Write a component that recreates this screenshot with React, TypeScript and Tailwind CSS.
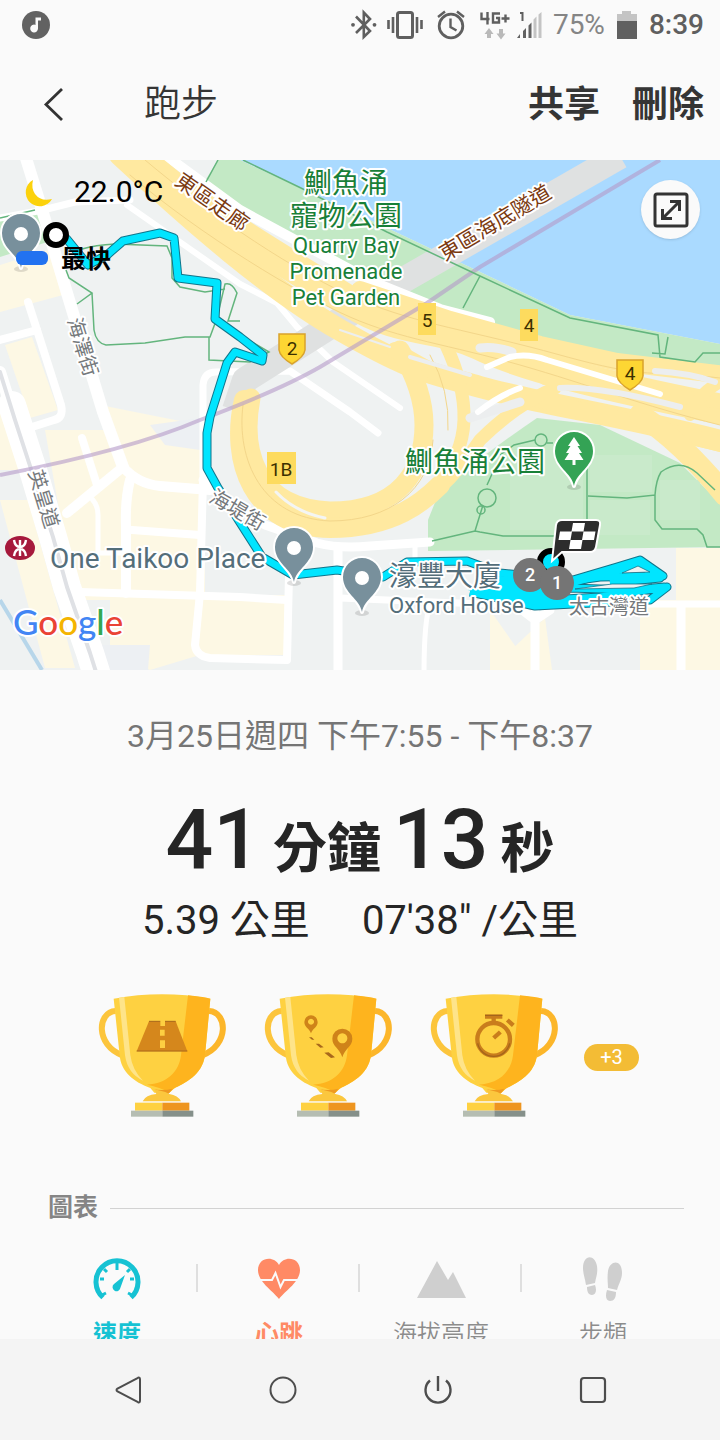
import { ReactNode } from "react";

const NAV_ICON = "h-[30px] w-[30px]";

function StatusBar() {
  return (
    <div className="flex h-[50px] items-center justify-between pl-[21px] pr-4 text-[#5f5f5f]">
      <svg viewBox="0 0 30 30" className="h-[30px] w-[30px]" aria-hidden="true">
        <circle cx="15" cy="15" r="14" fill="#626262" />
        <path d="M14.5 7.5h5.5v3h-3v8a3.9 3.9 0 1 1-2.5-3.6z" fill="#fafafa" />
      </svg>
      <div className="flex items-center">
        <svg viewBox="352 8 194 32" className="mr-2 h-8 w-[194px]" fill="none" stroke="#5f5f5f" aria-hidden="true">
          {/* bluetooth */}
          <path d="M357 15.5 371 30 364.8 36V11.5L371 18 357 32" strokeWidth="2.6" />
          <circle cx="354" cy="23.8" r="1.9" fill="#5f5f5f" stroke="none" />
          <circle cx="375.5" cy="23.8" r="1.9" fill="#5f5f5f" stroke="none" />
          {/* vibrate */}
          <rect x="398.5" y="11.5" width="15" height="25" rx="2" strokeWidth="3" />
          <path d="M394 16v16M418 16v16M389.5 19v9M422.5 19v9" strokeWidth="2.6" />
          {/* alarm */}
          <circle cx="452" cy="25" r="11.8" strokeWidth="2.8" />
          <path d="M451.5 17.5V26l6 3.5M439 16l7-5.5M458 10.5l7 5.5" strokeWidth="2.4" />
          {/* network */}
          <path d="M482.5 11.5V18h8M488.5 11v12.500M501 12.500h-7v9h6v-4.500h-3M502.5 17.500h8M506.5 13.500v8" strokeWidth="2.4" />
          <path d="M490 33v4M502 28v5" stroke="#b9b9b9" strokeWidth="4" />
          <path d="M490 27l4.5 6h-9zM502 38.5l4.5-6h-9z" fill="#b9b9b9" stroke="none" />
          <path d="M521 12h2.5v8" strokeWidth="2" />
          <path d="M518 37l3-4v4zM524 37v-7l3-3v10zM529.5 37V24.5l3-3V37z" fill="#626262" stroke="none" />
          <path d="M534.5 37V18.5l3-3V37zM539.5 37V13.5l3-2.5v26z" fill="#c4c4c4" stroke="none" />
        </svg>
        <span className="text-[28px] leading-8 text-[#858585]">75%</span>
        <svg viewBox="0 0 20 28" className="mx-3 h-7 w-5" aria-hidden="true">
          <path d="M5 0h9v3h6v7H0V3h5z" fill="#c4c4c4" />
          <path d="M0 10h20v18H0z" fill="#606060" />
        </svg>
        <span className="text-[28px] font-medium leading-8">8:39</span>
      </div>
    </div>
  );
}

function Toolbar() {
  return (
    <div className="flex h-[110px] items-center pl-10 pr-4 text-[#353535]">
      <button aria-label="返回" className="flex h-12 w-[104px] items-center">
        <svg viewBox="0 0 30 40" className="h-10 w-[30px]" fill="none" stroke="#333" strokeWidth="2.8">
          <path d="M22 4 6 19.5 22 35" />
        </svg>
      </button>
      <h1 className="flex-1 text-[37px] font-[350] leading-[48px]">跑步</h1>
      <button className="text-[36px] font-bold leading-[48px]">共享</button>
      <button className="ml-8 text-[36px] font-bold leading-[48px]">刪除</button>
    </div>
  );
}

function Pin({ x, y, color = "#78909c", children }: { x: number; y: number; color?: string; children?: ReactNode }) {
  return (
    <g transform={`translate(${x} ${y})`}>
      <ellipse cx="0" cy="1" rx="7" ry="3" fill="#000" opacity=".12" />
      <path
        d="M0 0C-2-13-19-19-19-35a19 19 0 1 1 38 0C19-19 2-13 0 0z"
        fill={color}
        stroke="#fff"
        strokeWidth="4"
        paintOrder="stroke"
        strokeLinejoin="round"
      />
      {children ?? <circle cy="-34" r="7" fill="#fff" />}
    </g>
  );
}

function Roads() {
  return (
    <g fill="none" strokeLinecap="round" strokeLinejoin="round">
      {/* minor streets */}
      <g stroke="#fff" strokeWidth="10">
        <path d="M0 218 43 210 75 202 130 200" strokeWidth="7" />
        <path d="M25 155 43 213 67 293 103 412 123 467" strokeWidth="12" />
        <path d="M28 302 37 330 61 405Q64 418 54 420L32 427" strokeWidth="8" />
        <path d="M0 340 37 330" strokeWidth="8" />
        <path d="M0 372 15 420" strokeWidth="12" />
        <path d="M12 405 33 470 53 537 67 587 90 653 97 675" strokeWidth="28" />
        <path d="M82 438 97 485" strokeWidth="8" />
        <path d="M67 513 123 467Q138 484 160 486L210 490" />
        <path d="M130 480Q125 500 126 527V593" />
        <path d="M132 530 200 535M80 592 240 597 287 600" strokeWidth="8" />
        <path d="M90 497Q98 504 98 515V553H125" strokeWidth="5" />
        <path d="M203 480V385Q204 372 216 372L290 371 350 412 378 433" strokeWidth="7" />
        <path d="M203 480 200 593 195 645Q196 656 210 658L287 660 289 575" strokeWidth="8" />
        <path d="M203 480Q240 510 265 525L317 543Q340 549 370 546L430 542" strokeWidth="9" />
        <path d="M338 547V675" strokeWidth="9" />
        <path d="M340 598 480 604H725" strokeWidth="7" />
        <path d="M522 610 535 620 550 610M535 612V675M681 607V675" strokeWidth="9" />
        <path d="M415 545V565M430 605Q424 620 424 675" strokeWidth="5" />
        <path d="M127 205 240 284 277 303 297 327 333 362 400 408" strokeWidth="6" />
      </g>
      <path d="M0 372 15 420 33 475 53 537 67 587 90 653 97 675" stroke="#dfe1e5" strokeWidth="4" />

      {/* tunnel approach */}
      <path d="M235 410 245 380 400 282 620 156" stroke="#dfe1e1" strokeWidth="26" strokeLinecap="butt" />

      {/* expressway */}
      <path d="M165 155 240 210 373 282 440 309 490 322" stroke="#fff" strokeWidth="10" />
      <path d="M135 155C200 215 300 270 350 302S440 325 480 345 600 385 725 410" stroke="#ffe9a0" strokeWidth="31" />
      <path d="M120 155C190 220 270 290 340 330S420 370 480 387 620 415 725 442" stroke="#ffe9a0" strokeWidth="22" />
      <path d="M360 290 450 320 540 345 617 362 725 375" stroke="#ffe9a0" strokeWidth="18" />
      <path d="M395 350Q420 365 440 375L560 405 725 445" stroke="#ffe9a0" strokeWidth="16" />
      <path d="M545 378Q580 372 620 390L725 402" stroke="#ffe9a0" strokeWidth="14" />
      <path d="M640 415Q680 440 725 495" stroke="#ffe9a0" strokeWidth="22" />
      <path d="M690 415Q700 390 725 380" stroke="#ffe9a0" strokeWidth="12" />
      <path d="M555 388Q515 405 480 440 460 470 440 488" stroke="#ffe9a0" strokeWidth="13" />
      <path d="M445 343Q465 385 464 420T435 490" stroke="#ffe9a0" strokeWidth="13" />
      {/* interchange loop */}
      <path d="M251 398C241 450 255 508 330 511 400 511 424 470 424 425 424 400 415 375 400 350" stroke="#ffe9a0" strokeWidth="19" />
      <path d="M244 400C230 460 252 528 330 528 395 528 425 500 440 485" stroke="#ffe9a0" strokeWidth="20" />
      <path d="M276 492Q295 512 325 518" stroke="#f4f5f3" strokeWidth="3" />
      {/* carriageway hairlines */}
      <g stroke="#f3d68a" strokeWidth="1">
        <path d="M130 175C200 235 300 295 350 317S450 345 520 365 640 405 720 425" />
        <path d="M145 160C210 215 300 275 360 300S470 330 560 355 650 370 720 378" />
        <path d="M243 405C236 460 262 518 330 521 390 521 430 490 433 440" />
        <path d="M430 355Q450 390 448 430" />
      </g>
      <g stroke="#eceeef" strokeWidth="6">
        <path d="M480 348Q495 346 512 352" strokeWidth="9" />
        <path d="M655 371Q690 373 715 382" />
        <path d="M560 388Q600 386 680 407" />
        <path d="M410 357 470 375" strokeWidth="4" />
        <path d="M470 418 520 402" strokeWidth="9" />
        <path d="M340 330 390 347" strokeWidth="2" />
      </g>
      <path d="M487 367 510 357Q528 353 547 360L660 394" stroke="#fff" strokeWidth="6" />
      <path d="M478 412Q500 395 520 388" stroke="#fff" strokeWidth="6" />
    </g>
  );
}

function RouteMap() {
  return (
    <svg viewBox="0 160 720 510" className="block h-auto w-full" role="img" aria-label="跑步路線地圖">
      <path d="M0 160h720v510H0z" fill="#eff2f2" />
      {/* built-up blocks */}
      <g fill="#fdf8e4">
        <path d="M0 265 48 250 63 295 0 312zM5 345 32 337 58 410 30 418zM100 405 150 415 200 425V480L130 475zM45 430 110 430 205 480V600H75z" />
        <path d="M0 500 28 500 75 668H45zM110 595H285V655H200L150 670 110 650zM240 603 275 605 285 640 240 652zM0 410 8 410 25 470H0zM490 610 525 660V670H490zM545 618 552 670H490" />
        <path d="M640 600H720V670H640zM676 548H720V600H676z" />
      </g>
      <path d="M150 425 200 418V450L165 445zM100 645 150 645 148 670H100z" fill="#edf0f3" />
      <path d="M0 600 42 670" stroke="#b7d6ea" strokeWidth="4" />

      {/* harbour and promenade */}
      <path d="M240 160 387 228 480 272 570 315 720 344V160z" fill="#aadaff" />
      <path d="M218 160H240L387 228 480 272 570 315 720 344V366L617 356 557 347 480 326 373 283 240 212 203 184z" fill="#c3e9c5" />
      <path d="M0 218 43 206 60 238 0 257z" fill="#c3e9c5" />
      <path d="M428 551V520L440 490Q490 450 537 418L600 425 680 463 720 503V547z" fill="#c3e9c5" />
      <path d="M510 450H583V530H510zM590 455H652V492H590zM590 500H650V535H590zM660 480H700V520H660z" fill="#c9eacb" />

      <Roads />

      <path d="M0 475Q130 450 200 420 280 390 320 367L427 303 480 267 660 160" fill="none" stroke="#b49ac8" strokeOpacity=".6" strokeWidth="4" />

      {/* footpaths */}
      <g fill="none" stroke="#63b57d" strokeWidth="1.5">
        <path d="M243 160 303 189 387 232 480 276 570 318 658 335 660 357 695 362 703 353H720M668 337 665 354 652 353M480 276 463 308M218 160 206 182" />
        <path d="M0 218 35 210M66 270 69 278 92 293 77 304M92 293 94 330Q96 343 106 345L145 343 185 337H210L217 318 225 284Q232 282 237 293L228 321H240M82 249Q95 245 115 244L167 246 172 258V278L180 287 205 292 225 289M209 337V360L250 362 269 352 240 335" />
        <path d="M432 541 475 531 480 532 503 536H575M475 531 483 505M487 485 497 463M500 455 514 445 535 440M547 443 553 443M587 465V520M588 496 627 498 655 495V520L662 529H697L703 535 707 547H720M655 495Q656 480 661 472 680 458 697 473L715 490" />
        <circle cx="487" cy="498" r="9" />
        <circle cx="481" cy="510" r="4" />
        <circle cx="541" cy="440" r="6" />
      </g>

      {/* recorded route */}
      <g fill="none" strokeLinejoin="round">
        {[
          { color: "#11758b", width: 9 },
          { color: "#00e5ff", width: 7 },
        ].map(({ color, width }) => (
          <g key={color} stroke={color} strokeWidth={width}>
            <path d="M66 238 88 265 107 255 123 241 160 233 174 238 178 278 217 283 215 319 240 337 263 355 262 361 235 352 227 363 210 417 207 433V468L218 488 262 557 293 575 337 570 383 577 407 562 467 561 500 573 573 580 617 567 640 560 663 576 600 577 480 594 530 601 600 597 667 587 650 600 535 606 470 592" />
            <path d="M480 590 530 592 570 588 630 590 665 587M565 585 600 575 640 565 660 578 610 583" />
          </g>
        ))}
      </g>
      <path d="M468 590 500 576 565 580 560 604 535 605z" fill="#00e5ff" />
      <path d="M622 573 638 566 650 572zM575 589 612 584 652 584 634 588z" fill="#eff2f2" stroke="#11758b" strokeWidth=".8" />

      <circle cx="551" cy="562" r="11" fill="#00e5ff" stroke="#000" strokeWidth="6" />
      <Pin x={21} y={268} />
      <Pin x={294} y={582} />
      <Pin x={362} y={612} />
      <Pin x={574} y={486} color="#34a355">
        <path d="M0-49 6-40H3.5L8-33H5L9.5-26H1.5V-21h-3V-26H-9.5L-5-33H-8L-3.5-40H-6z" fill="#fff" />
      </Pin>

      {/* road shields */}
      <g fontSize="19" textAnchor="middle" fill="#3c3000">
        <path d="M418 303h18v32h-18zM520 309h18v32h-18zM267 452h29v32h-29z" fill="#fddb5e" />
        <text x="427" y="327">5</text>
        <text x="529" y="332">4</text>
        <text x="281" y="476">1B</text>
        <path d="M279 334H305V350Q304 357 292 364 280 357 279 350z" fill="#fdd633" stroke="#d9a32c" strokeWidth="1.5" />
        <path d="M617 360H643V376Q642 383 630 390 618 383 617 376z" fill="#fdd633" stroke="#d9a32c" strokeWidth="1.5" />
        <text x="292" y="355">2</text>
        <text x="630" y="380">4</text>
      </g>

      {/* place names */}
      <g stroke="#fff" strokeWidth="4" strokeLinejoin="round" paintOrder="stroke">
        <g fill="#188038" textAnchor="middle" fontSize="22">
          <text x="346" y="193" fontSize="28">鰂魚涌</text>
          <text x="346" y="226" fontSize="28">寵物公園</text>
          <text x="346" y="253">Quarry Bay</text>
          <text x="346" y="279">Promenade</text>
          <text x="346" y="305">Pet Garden</text>
          <text x="475" y="472" fontSize="28">鰂魚涌公園</text>
        </g>
        <g fill="#7b3a10" textAnchor="middle" fontSize="21">
          <text transform="translate(208 208) rotate(35)">東區走廊</text>
          <text transform="translate(499 229) rotate(-31)">東區海底隧道</text>
        </g>
        <g fill="#546e7a">
          <text x="50" y="568" fontSize="28">One Taikoo Place</text>
          <text x="389" y="586" fontSize="28">濠豐大廈</text>
          <text x="389" y="613" fontSize="22">Oxford House</text>
        </g>
        <g fill="#75797c" textAnchor="middle" fontSize="20">
          <text transform="translate(76 349) rotate(73)">海澤街</text>
          <text transform="translate(37 501) rotate(73)">英皇道</text>
          <text transform="translate(234 516) rotate(30)">海堤街</text>
          <text x="609" y="614">太古灣道</text>
        </g>
        <text x="13" y="635" fontSize="35" className="font-['Lato',sans-serif] font-medium">
          <tspan fill="#4285f4">G</tspan>
          <tspan fill="#ea4335">o</tspan>
          <tspan fill="#f4b400">o</tspan>
          <tspan fill="#4285f4">g</tspan>
          <tspan fill="#34a853">l</tspan>
          <tspan fill="#ea4335">e</tspan>
        </text>
      </g>

      {/* MTR station */}
      <ellipse cx="20" cy="548" rx="15" ry="12" fill="#a6193c" />
      <path d="M20 540v16M14 540q1 7 6 7t6-7M14 556q1-7 6-7t6 7" fill="none" stroke="#fff" strokeWidth="2.4" />

      {/* start, kilometre and finish markers */}
      <circle cx="56" cy="235" r="10" fill="#fff" stroke="#000" strokeWidth="6" />
      <rect x="16" y="251" width="32" height="14" rx="6" fill="#2272f0" />
      <text x="61" y="268" fontSize="25" className="font-bold">最快</text>
      <g fill="#757575">
        <circle cx="530" cy="575" r="17" />
        <circle cx="557" cy="583" r="17" />
      </g>
      <g fill="#fff" fontSize="18" textAnchor="middle" className="font-medium">
        <text x="530" y="581">2</text>
        <text x="557" y="589">1</text>
      </g>
      <path d="M562 520H596Q601 520 600 525L596 547Q595 552 590 552H562L552 561 556 525Q557 520 562 520z" fill="#2d2d2d" stroke="#fff" strokeWidth="2" />
      <path d="M573 523h12l-1.5 8.5h-12zM560 531.5h12l-1.5 8.5h-12zM583.5 531.5h12l-1.5 8.5h-12zM570.5 540h12l-1.5 9h-12z" fill="#fff" />

      {/* weather */}
      <path d="M33 180A14 14 0 1 0 52 199Q41 202 35 194 31 188 33 180z" fill="#fcd20c" />
      <text x="74" y="202" fontSize="30">22.0°C</text>
    </svg>
  );
}

function Trophy({ label, children }: { label: string; children: ReactNode }) {
  return (
    <svg viewBox="0 0 390 390" className="h-[130px] w-[130px]" role="img" aria-label={label}>
      <g fill="none" strokeWidth="18">
        <path d="M56 57C0 60-5 160 76 190" stroke="#fcc53c" />
        <path d="M336 57C392 60 397 160 316 190" stroke="#fcb62a" />
      </g>
      <path d="M50 20Q195-6 340 20L324 190C316 250 262 274 230 290L217 302H172L160 288C110 270 72 240 68 190z" fill="#fed141" />
      <path d="M273 10Q315 14 340 20L324 190C316 250 262 274 230 290L217 302Q190 285 150 278C210 275 246 240 252 190z" fill="#feb41e" />
      <path d="M66 17 82 15 100 190Q106 235 138 266 92 245 84 190z" fill="#fee48a" />
      <path d="M164 290Q196 298 226 290L217 302 212 308Q190 300 172 292z" fill="#ee9a22" />
      <path d="M137 328Q146 308 178 306L172 292 205 300 217 306Q243 310 252 328z" fill="#fbc73e" />
      <path d="M114 332h82v24h-82z" fill="#fed141" />
      <path d="M196 332h81v24h-81z" fill="#ee951f" />
      <path d="M102 356h94v18h-94z" fill="#b5bdb2" />
      <path d="M196 356h93v18h-93z" fill="#85908a" />
      {children}
    </svg>
  );
}

function Summary() {
  return (
    <section className="text-center text-[#252525]">
      <p className="mt-[42px] text-[32px] leading-[48px] text-[#757575]">3月25日週四 下午7:55 - 下午8:37</p>
      <p className="mt-8 flex items-baseline justify-center gap-3 text-[54px] font-bold leading-[96px]">
        <span className="text-[84px] font-medium">41</span>
        <span>分鐘</span>
        <span className="text-[84px] font-medium">13</span>
        <span>秒</span>
      </p>
      <p className="flex justify-center gap-[52px] text-[40px] leading-[46px]">
        <span>5.39 公里</span>
        <span>07'38" /公里</span>
      </p>
    </section>
  );
}

function Trophies() {
  return (
    <section className="mt-12 flex items-center justify-center gap-9 pl-4">
      <Trophy label="距離獎盃">
        <path d="M156 88h80l35 90H119z" fill="#d5871c" />
        <path d="M156 88h80M119 177h152" stroke="#a8681c" strokeWidth="3" />
        <path d="M190 84h14v18h-14zM189 113h14v18h-14zM189 145h15v23h-15z" fill="#fdcf42" />
      </Trophy>
      <Trophy label="路線獎盃">
        <g fill="#cf8319" fillRule="evenodd">
          <path d="M144 124C138 108 124 106 124 90a20 20 0 0 1 40 0c0 16-14 18-20 34zM144 80a9 9 0 1 0 .1 0z" />
          <path d="M238 196C230 168 208 164 208 140a30 30 0 0 1 60 0c0 24-22 28-30 56zM238 124a15 15 0 1 0 .1 0z" />
        </g>
        <path d="M138 136l8 0 8 7h-7zM158 155l10 0 14 11-10 1zM184 182l13-1 19 15-12 2z" fill="#a8681c" />
      </Trophy>
      <Trophy label="時間獎盃">
        <g fill="none" stroke="#c97d1c" strokeWidth="13">
          <circle cx="194" cy="142" r="49" />
          <path d="M168 74h52M194 74v20" />
          <path d="M194 138 214 120M235 84l18 16" />
          <path d="M168 70h52M146 154a49 49 0 0 0 96 0" stroke="#a3651b" strokeWidth="4" />
        </g>
      </Trophy>
      <button className="-ml-[11px] h-[27px] w-[55px] rounded-full bg-[#f3bc35] text-[20px] leading-[27px] text-white">+3</button>
    </section>
  );
}

const METRICS = [
  {
    label: "速度",
    style: "text-[#16c2d3] font-bold",
    icon: (
      <>
        <path d="M10 41.5A21 21 0 1 1 38 41.5" fill="none" stroke="currentColor" strokeWidth="5" />
        <path d="M24 7v7M7 23h4M41 23h-4M11 13l3 3M37 13l-3 3M7 40l6-3M41 40l-6-3" stroke="currentColor" strokeWidth="3" />
        <path d="M32 19 27.5 31.5A4 4 0 1 1 21 28z" fill="currentColor" />
      </>
    ),
  },
  {
    label: "心跳",
    style: "text-[#ff8a65] font-bold",
    icon: (
      <>
        <path d="M24 43C17 34 3 26 3 14 3 1 19-1 24 9 29-1 45 1 45 14 45 26 31 34 24 43z" fill="currentColor" />
        <path d="M4 24H17L20.5 17 25.5 31 29 24H44" fill="none" stroke="#fafafa" strokeWidth="2" />
      </>
    ),
  },
  {
    label: "海拔高度",
    style: "text-[#8c8c8c] font-[350]",
    icon: <path d="M0 42 20 5 31 24 36 16 49 42z" fill="#cfcfcf" />,
  },
  {
    label: "步頻",
    style: "text-[#8c8c8c] font-[350]",
    icon: (
      <g fill="#cfcfcf">
        <path d="M4 12C4-2 16-2 18 10c1 8-1 11-2 17L7 29C6 22 4 18 4 12zM8 31l8-2c2 5 1 10-3 10s-5-4-5-8z" />
        <path d="M43 17c0-14-12-13-14-2-1 8 0 12 0 17l9 2c2-7 5-11 5-17zM28 34l9 2c0 6-2 9-6 9s-5-5-3-11z" />
      </g>
    ),
  },
];

function Charts() {
  return (
    <section className="mt-[66px] px-9">
      <div className="flex items-center gap-3 pl-3">
        <h2 className="text-[25px] font-bold leading-10 text-[#858585]">圖表</h2>
        <hr className="flex-1 border-[#d2d2d2]" />
      </div>
      <div className="mt-7 grid grid-cols-4">
        {METRICS.map(({ label, style, icon }, i) => (
          <button key={label} className={`relative flex flex-col items-center gap-3 ${style}`}>
            <svg viewBox="0 0 48 48" className="h-12 w-12 overflow-visible" aria-hidden="true">
              {icon}
            </svg>
            <span className="text-[24px] leading-9">{label}</span>
            {i < METRICS.length - 1 && <span className="absolute right-0 top-2 h-7 w-[2px] bg-[#dfdfdf]" />}
          </button>
        ))}
      </div>
    </section>
  );
}

function NavigationBar() {
  return (
    <nav className="flex h-[101px] shrink-0 items-center bg-[#f4f4f4] px-[50px] text-[#4d4d4d]">
      <button aria-label="返回" className="flex flex-1 justify-center">
        <svg viewBox="0 0 30 30" className={NAV_ICON} fill="none" stroke="currentColor" strokeWidth="2">
          <path d="M25 2.8 4.5 13.5Q2.5 15 4.5 16.5L25 27.2Q27 28 27 25.5V4.5Q27 2 25 2.8z" />
        </svg>
      </button>
      <button aria-label="主畫面" className="flex flex-1 justify-center">
        <svg viewBox="0 0 30 30" className={NAV_ICON} fill="none" stroke="currentColor" strokeWidth="2">
          <circle cx="15" cy="15" r="12.5" />
        </svg>
      </button>
      <button aria-label="電源" className="flex flex-1 justify-center">
        <svg viewBox="0 0 30 30" className={NAV_ICON} fill="none" stroke="currentColor" strokeWidth="2.4">
          <path d="M15 1v15M7 5.5a12.5 12.5 0 1 0 16 0" />
        </svg>
      </button>
      <button aria-label="最近使用" className="flex flex-1 justify-center">
        <svg viewBox="0 0 30 30" className={NAV_ICON} fill="none" stroke="currentColor" strokeWidth="2.2">
          <rect x="3" y="3" width="24" height="24" rx="3" />
        </svg>
      </button>
    </nav>
  );
}

export default function App() {
  return (
    <div className="flex h-screen flex-col bg-[#fafafa] font-['Roboto','Noto_Sans_CJK_TC',sans-serif]">
      <header className="shrink-0">
        <StatusBar />
        <Toolbar />
      </header>
      <main className="min-h-0 flex-1 overflow-y-auto [scrollbar-width:none]">
        <section className="relative">
          <RouteMap />
          <button aria-label="放大地圖" className="absolute right-5 top-5 flex h-[59px] w-[59px] items-center justify-center rounded-full bg-[#fafafa] shadow">
            <svg viewBox="0 0 36 36" className="h-9 w-9" fill="none" stroke="#333" strokeWidth="3">
              <rect x="2" y="2" width="32" height="32" rx="2" />
              <path d="M10 26 26 10M17 9.5h9.5V19M9.5 17v9.5H19" />
            </svg>
          </button>
        </section>
        <Summary />
        <Trophies />
        <Charts />
      </main>
      <NavigationBar />
    </div>
  );
}
